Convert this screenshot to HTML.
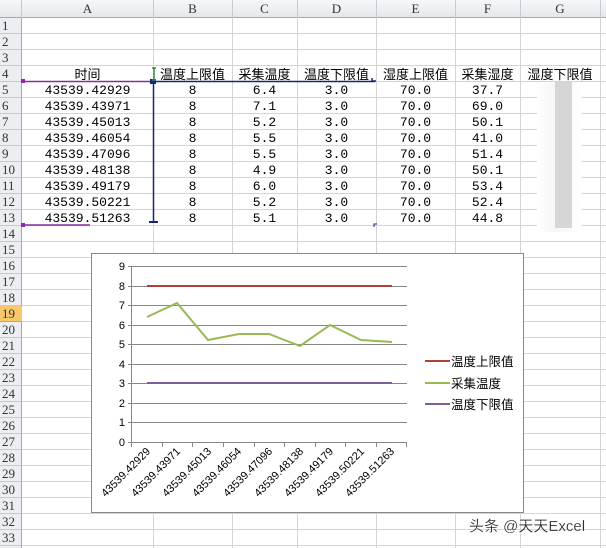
<!DOCTYPE html>
<html><head><meta charset="utf-8"><style>
*{margin:0;padding:0;box-sizing:border-box}
body{width:606px;height:548px;overflow:hidden;background:#fff;position:relative;font-family:"Liberation Mono","Noto Sans CJK SC",monospace;font-size:13px;color:#000}
.grid{position:absolute;left:22px;top:18px;width:584px;height:530px;background:repeating-linear-gradient(to bottom,transparent 0,transparent 15px,#d4d4d4 15px,#d4d4d4 16px)}
.v{position:absolute;top:0;width:1px;height:548px;background:#d4d4d4}
.colh{position:absolute;left:0;top:0;width:606px;height:18px;background:linear-gradient(#f6f7f9,#e4e7eb);border-bottom:1px solid #9eaabb;font-family:"Liberation Serif",serif;font-size:13px;color:#333}
.colh span{position:absolute;top:1px;text-align:center}
.colh i{position:absolute;top:0;width:1px;height:18px;background:#c5cbd3}
.rowh{position:absolute;left:0;top:18px;width:22px;height:530px;background:#eceef1;border-right:1px solid #9eaabb;font-family:"Liberation Serif",serif;font-size:13px;color:#333;line-height:16px;text-align:left;padding-left:2px;background-image:repeating-linear-gradient(to bottom,transparent 0,transparent 15px,#c5cbd3 15px,#c5cbd3 16px)}
.hl{position:absolute;left:0;top:288px;width:22px;height:16px;background:#f9c86a;border-bottom:1px solid #e0a040}
table{position:absolute;left:22px;top:67px;border-collapse:collapse;table-layout:fixed}
tr{height:16px}
td{height:16px;padding:0;text-align:center;line-height:16px;white-space:nowrap;overflow:hidden}
.cn{font-family:"Liberation Sans","Noto Sans CJK SC",sans-serif;font-size:13px}
</style></head><body>
<div class="grid"></div>
<div class="v" style="left:153px"></div><div class="v" style="left:232px"></div><div class="v" style="left:297px"></div><div class="v" style="left:376px"></div><div class="v" style="left:455px"></div><div class="v" style="left:520px"></div><div class="v" style="left:600px"></div>
<div class="colh">
<span style="left:22px;width:131px">A</span><i style="left:153px"></i>
<span style="left:153px;width:79px">B</span><i style="left:232px"></i>
<span style="left:232px;width:65px">C</span><i style="left:297px"></i>
<span style="left:297px;width:79px">D</span><i style="left:376px"></i>
<span style="left:376px;width:79px">E</span><i style="left:455px"></i>
<span style="left:455px;width:65px">F</span><i style="left:520px"></i>
<span style="left:520px;width:80px">G</span><i style="left:600px"></i><i style="left:21px"></i>
</div>
<div class="rowh"><div class="hl"></div><div style="position:relative">1<br>2<br>3<br>4<br>5<br>6<br>7<br>8<br>9<br>10<br>11<br>12<br>13<br>14<br>15<br>16<br>17<br>18<br>19<br>20<br>21<br>22<br>23<br>24<br>25<br>26<br>27<br>28<br>29<br>30<br>31<br>32<br>33</div></div>
<div style="position:absolute;left:537px;top:83px;width:45px;height:149px;background:linear-gradient(to right,#fff,#f6f6f6 40%,#fff)"></div>
<div style="position:absolute;left:555px;top:82px;width:17px;height:146px;background:#d6d6d6"></div>
<table>
<colgroup><col style="width:131px"><col style="width:79px"><col style="width:65px"><col style="width:79px"><col style="width:79px"><col style="width:65px"><col style="width:80px"></colgroup>
<tr class="cn"><td>时间</td><td>温度上限值</td><td>采集温度</td><td>温度下限值</td><td>湿度上限值</td><td>采集湿度</td><td>湿度下限值</td></tr>
<tr><td>43539.42929</td><td>8</td><td>6.4</td><td>3.0</td><td>70.0</td><td>37.7</td><td></td></tr>
<tr><td>43539.43971</td><td>8</td><td>7.1</td><td>3.0</td><td>70.0</td><td>69.0</td><td></td></tr>
<tr><td>43539.45013</td><td>8</td><td>5.2</td><td>3.0</td><td>70.0</td><td>50.1</td><td></td></tr>
<tr><td>43539.46054</td><td>8</td><td>5.5</td><td>3.0</td><td>70.0</td><td>41.0</td><td></td></tr>
<tr><td>43539.47096</td><td>8</td><td>5.5</td><td>3.0</td><td>70.0</td><td>51.4</td><td></td></tr>
<tr><td>43539.48138</td><td>8</td><td>4.9</td><td>3.0</td><td>70.0</td><td>50.1</td><td></td></tr>
<tr><td>43539.49179</td><td>8</td><td>6.0</td><td>3.0</td><td>70.0</td><td>53.4</td><td></td></tr>
<tr><td>43539.50221</td><td>8</td><td>5.2</td><td>3.0</td><td>70.0</td><td>52.4</td><td></td></tr>
<tr><td>43539.51263</td><td>8</td><td>5.1</td><td>3.0</td><td>70.0</td><td>44.8</td><td></td></tr>
</table>
<svg width="606" height="548" style="position:absolute;left:0;top:0" font-family="Liberation Sans, Noto Sans CJK SC, sans-serif">
<line x1="22" y1="81.5" x2="153" y2="81.5" stroke="#8a2aa8" stroke-width="1.5"/>
<line x1="153" y1="81.5" x2="375" y2="81.5" stroke="#1a237e" stroke-width="1.5"/>
<line x1="153.5" y1="81" x2="153.5" y2="222" stroke="#1a237e" stroke-width="1.5"/>
<line x1="149" y1="222" x2="158" y2="222" stroke="#1a237e" stroke-width="2"/>
<rect x="150" y="79" width="6" height="5" fill="#1a237e"/>
<rect x="21" y="79" width="4" height="4" fill="#8a2aa8"/>
<line x1="22" y1="225" x2="90" y2="225" stroke="#8a2aa8" stroke-width="1.5"/>
<rect x="21" y="223" width="4" height="4" fill="#8a2aa8"/>
<path d="M152 68h4M154 68v12M152 80h4" stroke="#2e8b3c" stroke-width="1.5" fill="none"/>
<path d="M372 78v4M372 81h4" stroke="#1a237e" stroke-width="1.5"/>
<path d="M374 227v-3h3" stroke="#1a237e" stroke-width="1" fill="none"/>
<rect x="91.5" y="253.5" width="432" height="259" fill="#fff" stroke="#888"/>
<g stroke="#868686" stroke-width="1">
<line x1="128" y1="266.5" x2="407" y2="266.5"/><line x1="128" y1="286.5" x2="407" y2="286.5"/><line x1="128" y1="305.5" x2="407" y2="305.5"/><line x1="128" y1="325.5" x2="407" y2="325.5"/><line x1="128" y1="344.5" x2="407" y2="344.5"/><line x1="128" y1="364.5" x2="407" y2="364.5"/><line x1="128" y1="383.5" x2="407" y2="383.5"/><line x1="128" y1="403.5" x2="407" y2="403.5"/><line x1="128" y1="422.5" x2="407" y2="422.5"/><line x1="128" y1="442.5" x2="407" y2="442.5"/>
<line x1="131.5" y1="266" x2="131.5" y2="442"/>
<path d="M131.5 442v5M162.5 442v5M192.5 442v5M223.5 442v5M254.5 442v5M284.5 442v5M315.5 442v5M345.5 442v5M376.5 442v5M406.5 442v5"/>
</g>
<g font-size="11" text-anchor="end" fill="#000">
<text x="125" y="270">9</text><text x="125" y="290">8</text><text x="125" y="309">7</text><text x="125" y="329">6</text><text x="125" y="348">5</text><text x="125" y="368">4</text><text x="125" y="387">3</text><text x="125" y="407">2</text><text x="125" y="426">1</text><text x="125" y="446">0</text>
</g>
<line x1="147" y1="286" x2="392" y2="286" stroke="#b0403c" stroke-width="2"/>
<line x1="147" y1="383" x2="392" y2="383" stroke="#7b5ea0" stroke-width="2"/>
<polyline points="147,317 177,303 208,340 239,334 269,334 300,346 330,325 361,340 392,342" fill="none" stroke="#98b954" stroke-width="2"/>
<g font-size="11" text-anchor="end" fill="#000">
<text transform="translate(151,452) rotate(-45)">43539.42929</text>
<text transform="translate(181,452) rotate(-45)">43539.43971</text>
<text transform="translate(212,452) rotate(-45)">43539.45013</text>
<text transform="translate(242,452) rotate(-45)">43539.46054</text>
<text transform="translate(273,452) rotate(-45)">43539.47096</text>
<text transform="translate(304,452) rotate(-45)">43539.48138</text>
<text transform="translate(334,452) rotate(-45)">43539.49179</text>
<text transform="translate(365,452) rotate(-45)">43539.50221</text>
<text transform="translate(395,452) rotate(-45)">43539.51263</text>
</g>
<line x1="425" y1="361" x2="450" y2="361" stroke="#b0403c" stroke-width="2"/>
<line x1="425" y1="383" x2="450" y2="383" stroke="#98b954" stroke-width="2"/>
<line x1="425" y1="404" x2="450" y2="404" stroke="#7b5ea0" stroke-width="2"/>
<g font-size="12.5" fill="#000"><text x="451" y="366">温度上限值</text><text x="451" y="388">采集温度</text><text x="451" y="409">温度下限值</text></g>
<text x="469" y="531" font-size="15" fill="#222" stroke="#fff" stroke-width="0.2">头条 @天天Excel</text>
</svg>
</body></html>
